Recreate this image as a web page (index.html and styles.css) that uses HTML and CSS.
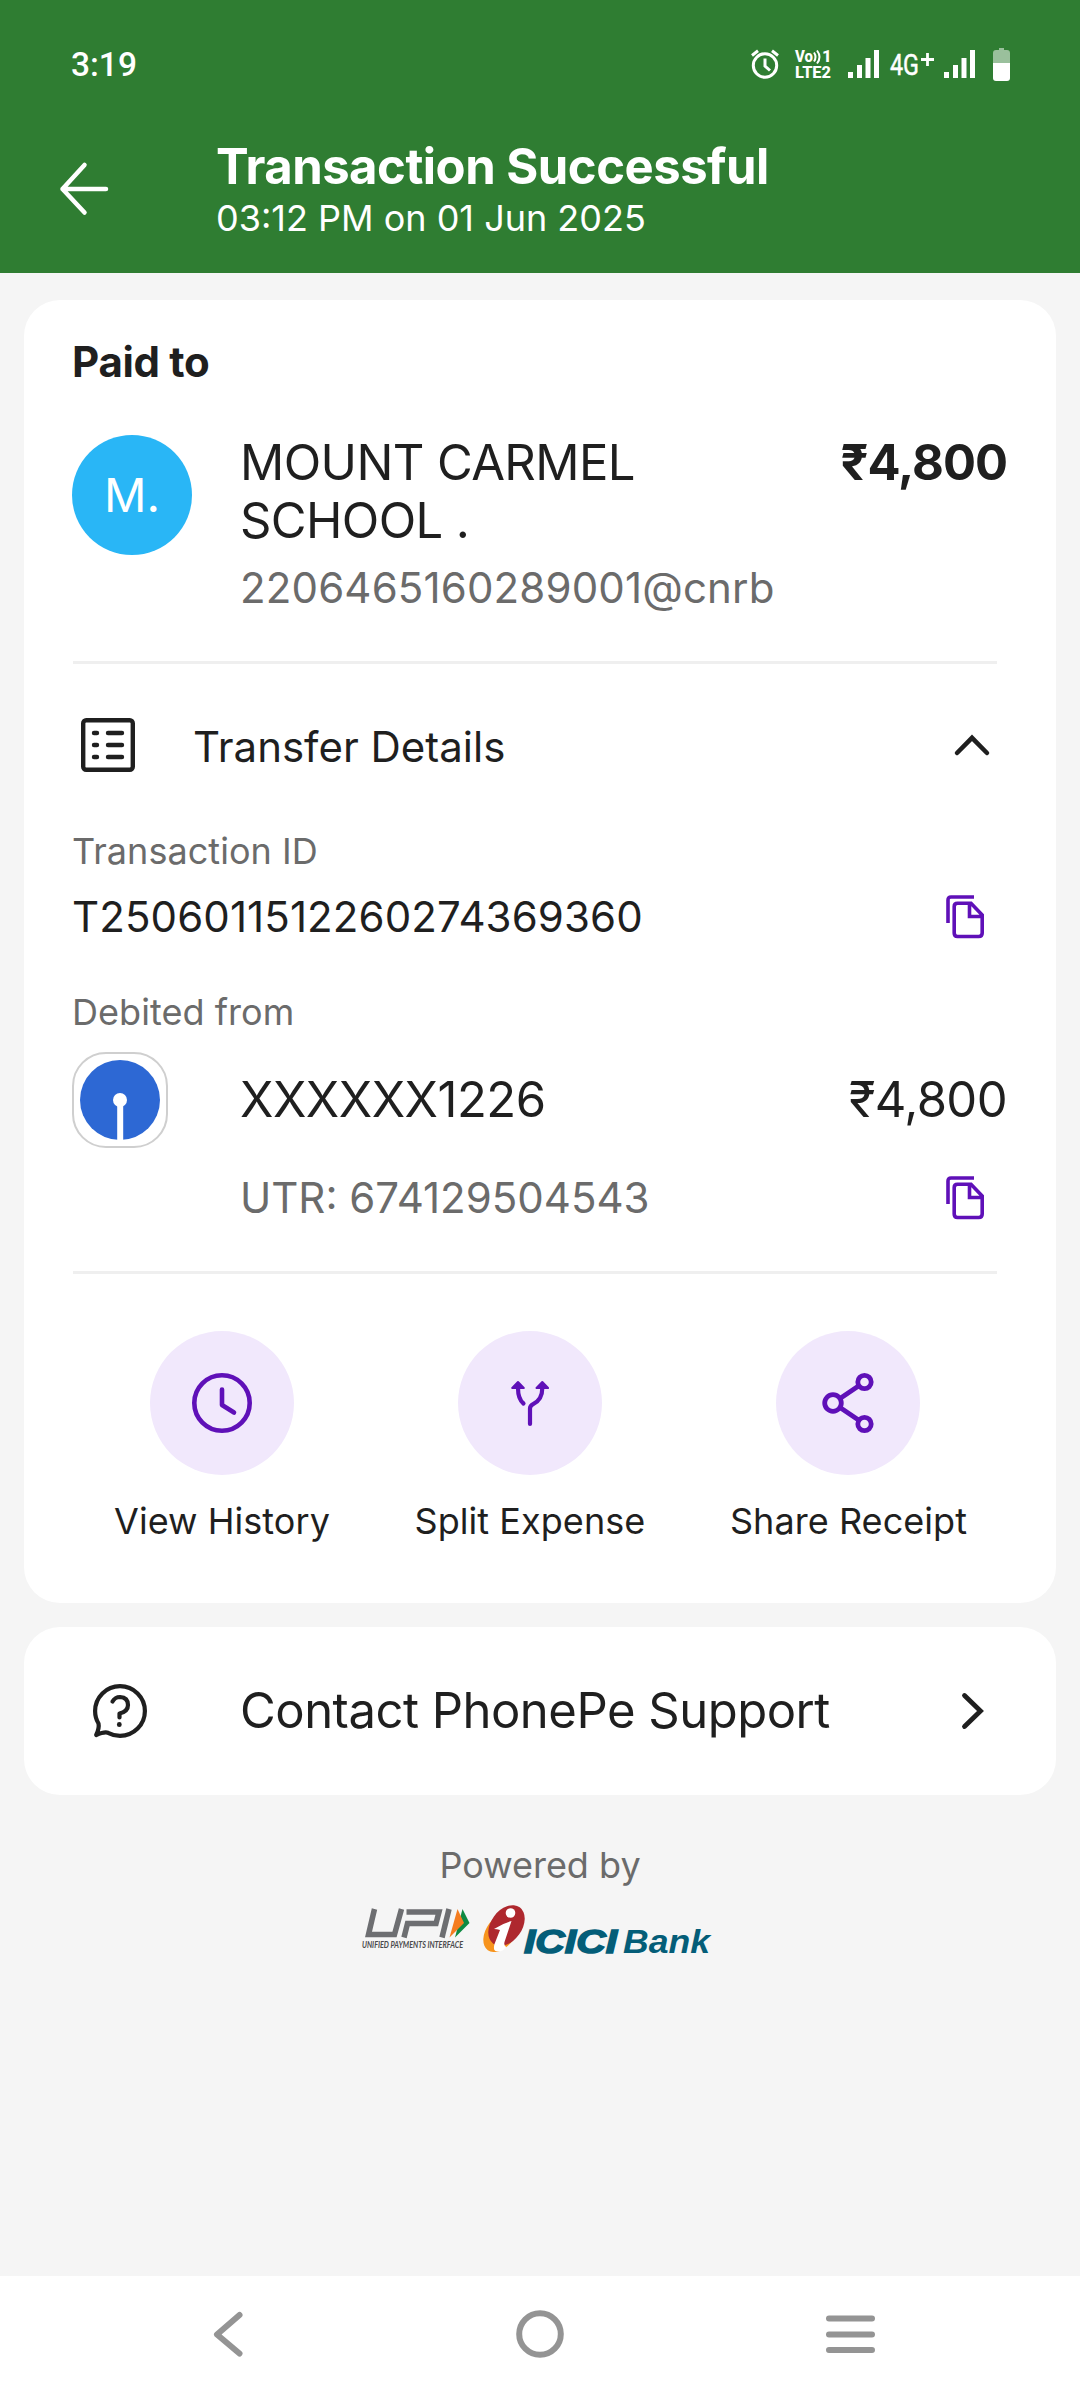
FILE: index.html
```
<!DOCTYPE html>
<html lang="en">
<head>
  <meta charset="UTF-8" />
  <meta name="viewport" content="width=device-width, initial-scale=1.0"/>
  <title>Transaction Successful</title>
  <link rel="stylesheet" href="styles.css">
</head>
<body>
  <!-- HEADER -->
  <header class="header">
    <div class="status-bar">
      <span class="time">3:19</span>
      <div class="status-icons">
        <svg class="alarm" width="30" height="30" viewBox="0 0 30 30" fill="none" stroke="#fff" stroke-width="3">
          <circle cx="15" cy="16.500" r="11.700"/>
          <path d="M2 6.500 8 1.800M28 6.500 22 1.800M15 9.500V17l5 4.500"/>
        </svg>
        <svg class="volte" width="41" height="38" viewBox="-2 -4 41 38">
          <text x="0" y="13" textLength="18" lengthAdjust="spacingAndGlyphs">Vo</text>
          <path d="M19 3.500q3 4.500 0 9M22 1.500q5 6.500 0 13" fill="none" stroke="#fff" stroke-width="2"/>
          <text x="27" y="13">1</text>
          <text x="0" y="28.500" textLength="36" lengthAdjust="spacingAndGlyphs">LTE2</text>
        </svg>
        <svg class="signal" width="31" height="28" viewBox="0 0 31 28" fill="#fff">
          <path d="M0 22h5v6H0zM9 15h5v13H9zM17.500 8h5v20h-5zM26 0h5v28h-5z"/>
        </svg>
        <svg class="net" width="44" height="36" viewBox="0 -4 44 36">
          <text x="0" y="24.500" textLength="29" lengthAdjust="spacingAndGlyphs">4G</text>
          <path d="M37.500 3v13M31 9.500h13" stroke="#fff" stroke-width="2.800"/>
        </svg>
        <svg class="signal second" width="31" height="28" viewBox="0 0 31 28" fill="#fff">
          <path d="M0 22h5v6H0zM9 15h5v13H9zM17.500 8h5v20h-5zM26 0h5v28h-5z"/>
        </svg>
        <svg class="battery" width="17" height="33" viewBox="0 0 17 33">
          <path d="M0 15V5q0-3 3-3h3V0h5v2h3q3 0 3 3v10z" fill="#9ac09c"/>
          <path d="M0 15h17v15q0 3-3 3H3q-3 0-3-3z" fill="#fff"/>
        </svg>
      </div>
    </div>
    <div class="title-bar">
      <svg class="back" width="50" height="54" viewBox="0 0 50 54" fill="none" stroke="#fff" stroke-width="4.500" stroke-linecap="round" stroke-linejoin="round">
        <path d="M25.500 3 3.500 27l22 23.500M3.500 27H47"/>
      </svg>
      <div class="titles">
        <h1>Transaction Successful</h1>
        <p>03:12 PM on 01 Jun 2025</p>
      </div>
    </div>
  </header>

  <!-- MAIN CONTENT -->
  <main class="content">
    <section class="card payment">
      <h2>Paid to</h2>
      <div class="payee">
        <div class="avatar">M.</div>
        <div class="payee-info">
          <div class="name">MOUNT CARMEL<br>SCHOOL .</div>
          <div class="vpa">2206465160289001@cnrb</div>
        </div>
        <div class="amount bold">₹4,800</div>
      </div>

      <hr>

      <div class="details-head">
        <svg class="list-icon" width="54" height="54" viewBox="0 0 54 54" fill="none" stroke="#1f1f1f" stroke-width="4.400">
          <rect x="2.200" y="2.200" width="49.600" height="49.600" rx="3"/>
          <path d="M13 15h3M27 15h14M13 27h3M27 27h14M13 39h3M27 39h14" stroke-linecap="round"/>
        </svg>
        <span class="details-title">Transfer Details</span>
        <svg class="chevron-up" width="36" height="22" viewBox="0 0 36 22" fill="none" stroke="#1f1f1f" stroke-width="4.500" stroke-linecap="round">
          <path d="M3 19 18 3.800 33 19"/>
        </svg>
      </div>

      <div class="label">Transaction ID</div>
      <div class="txn-row">
        <span class="txn-id">T2506011512260274369360</span>
        <svg class="copy" width="40" height="44" viewBox="0 0 40 44" fill="none" stroke="#5f10b8" stroke-width="3.600">
          <path d="M2 28V5q0-3 3-3h23"/>
          <path d="M11.500 8.200H25L36.200 20v18q0 3.500-3.500 3.500H11.500Q8.200 41.500 8.200 38V11.500q0-3.300 3.300-3.300zM23.500 9v12.500H36"/>
        </svg>
      </div>

      <div class="label debited">Debited from</div>
      <div class="bank-row">
        <div class="bank-logo">
          <svg width="80" height="80" viewBox="0 0 80 80">
            <circle cx="40" cy="40" r="40" fill="#2d68d4"/>
            <circle cx="40" cy="40" r="7" fill="#fff"/>
            <path d="M37.200 40h6v40h-6z" fill="#fff"/>
          </svg>
        </div>
        <span class="account">XXXXXX1226</span>
        <span class="amount">₹4,800</span>
      </div>
      <div class="utr-row">
        <span class="utr">UTR: 674129504543</span>
        <svg class="copy" width="40" height="44" viewBox="0 0 40 44" fill="none" stroke="#5f10b8" stroke-width="3.600">
          <path d="M2 28V5q0-3 3-3h23"/>
          <path d="M11.500 8.200H25L36.200 20v18q0 3.500-3.500 3.500H11.500Q8.200 41.500 8.200 38V11.500q0-3.300 3.300-3.300zM23.500 9v12.500H36"/>
        </svg>
      </div>

      <hr>

      <div class="actions">
        <div class="action">
          <div class="circle">
            <svg width="60" height="60" viewBox="0 0 60 60" fill="none" stroke="#5f10b8" stroke-width="4.600">
              <circle cx="30" cy="30" r="27.700"/>
              <path d="M30 16.500V32l12 7.500" stroke-linecap="round" stroke-linejoin="round"/>
            </svg>
          </div>
          <span>View History</span>
        </div>
        <div class="action">
          <div class="circle">
            <svg width="38" height="46" viewBox="0 0 38 46" fill="none" stroke="#5f10b8" stroke-width="4.200" stroke-linecap="round">
              <path d="M19 44V28.500q0-3 3.500-4.700 8.800-4.300 8.800-15.800M7 8q0 11 5.500 15.500"/>
              <path d="M1.200 8 7 2l5.800 6zM25.500 8l5.800-6 5.800 6z" fill="#5f10b8" stroke-width="2" stroke-linejoin="round"/>
            </svg>
          </div>
          <span>Split Expense</span>
        </div>
        <div class="action">
          <div class="circle">
            <svg width="52" height="60" viewBox="0 0 52 60" fill="none" stroke="#5f10b8" stroke-width="4.800">
              <circle cx="11" cy="30" r="8.300"/>
              <circle cx="42.500" cy="9" r="6.700"/>
              <circle cx="42.500" cy="51" r="6.700"/>
              <path d="M18 25.500 36.500 13M18 34.500 36.500 47"/>
            </svg>
          </div>
          <span>Share Receipt</span>
        </div>
      </div>
    </section>

    <section class="card support">
      <svg class="help-icon" width="54" height="54" viewBox="0 0 54 54" fill="none" stroke="#1f1f1f" stroke-width="4.200" stroke-linejoin="round" stroke-linecap="round">
        <path d="M5.500 39.500Q2.100 34 2.100 27a24.900 24.900 0 1 1 24.900 24.900Q21 51.900 15 48.800 11.500 47.500 3.200 51 6.500 44 5.500 39.500z"/>
        <path d="M19.500 17.500q2.500-4.500 7.500-4.500 8 .5 8 8 0 6.500-8.500 8.500v4"/>
        <path d="M26.300 40.500v.2" stroke-width="4.800"/>
      </svg>
      <span class="support-text">Contact PhonePe Support</span>
      <svg class="chevron-right" width="22" height="36" viewBox="0 0 22 36" fill="none" stroke="#1f1f1f" stroke-width="4.800" stroke-linecap="round">
        <path d="M2.500 2.500 18.500 18l-16 15.500"/>
      </svg>
    </section>

    <div class="powered">
      <p>Powered by</p>
      <div class="logos">
        <svg class="upi" width="110" height="48" viewBox="0 0 110 48">
          <g fill="none" stroke="#6d6e71" stroke-width="5.500">
            <path d="M13.500 1 7.500 26.500h26L40.500 1"/>
            <path d="M45.500 4h32.500l-3 11.500H46.500L43 29.500"/>
            <path d="M88 1 81 29.500"/>
          </g>
          <path d="M101.500 1 108.500 15 94 29.500z" fill="#0e8a43"/>
          <path d="M96.500 1 103 15 88.500 29.500z" fill="#f47c20"/>
          <text class="upi-tag" x="1" y="39.500" textLength="101" lengthAdjust="spacingAndGlyphs">UNIFIED PAYMENTS INTERFACE</text>
        </svg>
        <svg class="icici-logo" width="236" height="60" viewBox="0 0 236 60">
          <ellipse cx="19" cy="28" rx="14.500" ry="22.500" transform="rotate(36 19 28)" fill="#f7941d"/>
          <ellipse cx="24.500" cy="21.500" rx="15.500" ry="22.500" transform="rotate(36 24.500 21.500)" fill="#ae282e"/>
          <circle cx="28.500" cy="9" r="4.800" fill="#fff"/>
          <path d="M12 25q9-6 17.500-8l-7 21q-1 4 2 5-4 5-9 4.500-5 0-3-7.500l5.500-14q-3-1-6-1z" fill="#fff"/>
          <text class="icici" x="42" y="48.500" textLength="93" lengthAdjust="spacingAndGlyphs">ICICI</text>
          <text class="icici-bank" x="141" y="48.500" textLength="87" lengthAdjust="spacingAndGlyphs">Bank</text>
        </svg>
      </div>
    </div>
  </main>

  <!-- SYSTEM NAVIGATION -->
  <nav class="nav-bar">
    <svg width="32" height="46" viewBox="0 0 32 46" fill="none" stroke="#949494" stroke-width="6" stroke-linecap="round" stroke-linejoin="round">
      <path d="M27.500 4 5 23.500l22.500 19"/>
    </svg>
    <svg class="home" width="48" height="48" viewBox="0 0 48 48" fill="none" stroke="#949494" stroke-width="6">
      <circle cx="24" cy="24" r="20.800"/>
    </svg>
    <svg width="49" height="38" viewBox="0 0 49 38" fill="none" stroke="#949494" stroke-width="6" stroke-linecap="round">
      <path d="M3 3.500h43M3 19.500h43M3 35h43"/>
    </svg>
  </nav>
</body>
</html>
```
FILE: styles.css
```
/* ------------------------------------------------------------
   COLOR PALETTE
------------------------------------------------------------ */
:root {
  --green: #2f7d32;
  --page: #f5f5f5;
  --text: #1f1f1f;
  --muted: #6b6b6b;
  --line: #efefef;
  --lilac: #f1e8fc;
}

/* ------------------------------------------------------------
   GLOBAL & RESET
------------------------------------------------------------ */
* {
  margin: 0;
  padding: 0;
  box-sizing: border-box;
}
body {
  font-family: Inter, "Noto Sans", sans-serif;
  background-color: var(--page);
  color: var(--text);
  width: 1080px;
  height: 2392px;
  display: flex;
  flex-direction: column;
  overflow: hidden;
}
svg {
  display: block;
  flex-shrink: 0;
  overflow: visible;
}

/* ------------------------------------------------------------
   HEADER
------------------------------------------------------------ */
.header {
  background-color: var(--green);
  color: #fff;
  height: 273px;
}
.status-bar {
  height: 128px;
  padding: 0 70px 0 71px;
  display: flex;
  align-items: center;
  justify-content: space-between;
  font-family: Roboto, sans-serif;
}
.time {
  font-size: 33.5px;
  font-weight: 500;
}
.status-icons {
  display: flex;
  align-items: center;
}
.volte {
  margin-left: 13px;
}
.volte text {
  font-size: 17px;
  font-weight: 800;
  fill: #fff;
}
.signal {
  margin-left: 14px;
}
.net {
  margin-left: 11px;
}
.net text {
  font-size: 30px;
  fill: #fff;
  stroke: #fff;
  stroke-width: 0.5;
}
.signal.second {
  margin-left: 10px;
}
.battery {
  margin-left: 18px;
}
.title-bar {
  display: flex;
  padding-left: 59px;
}
.back {
  margin-top: 34px;
}
.titles {
  margin-left: 107px;
  padding-top: 10px;
}
.titles h1 {
  font-size: 49px;
  line-height: 58px;
  font-weight: 700;
  letter-spacing: -0.5px;
}
.titles p {
  font-size: 36px;
  line-height: 44px;
}

/* ------------------------------------------------------------
   PAYMENT CARD
------------------------------------------------------------ */
.content {
  flex: 1;
  padding: 27px 24px 0;
}
.card {
  background-color: #fff;
  border-radius: 36px;
}
.payment {
  height: 1303px;
  padding: 36px 49px 0 48px;
}
.payment h2 {
  font-size: 42px;
  line-height: 52px;
  font-weight: 700;
  letter-spacing: -0.3px;
}
.payee {
  display: flex;
  align-items: flex-start;
  height: 226px;
  margin-top: 47px;
}
.avatar {
  width: 120px;
  height: 120px;
  border-radius: 50%;
  background-color: #29b6f6;
  color: #fff;
  font-size: 47px;
  padding-bottom: 2px;
  display: flex;
  align-items: center;
  justify-content: center;
}
.payee-info {
  margin-left: 48px;
  flex: 1;
}
.name {
  font-size: 49px;
  line-height: 58px;
  letter-spacing: -0.6px;
  margin-top: -1px;
}
.vpa {
  font-size: 42px;
  line-height: 52px;
  margin-top: 12px;
  letter-spacing: 0.15px;
  color: var(--muted);
}
.amount {
  font-size: 49px;
  line-height: 58px;
  letter-spacing: -0.6px;
}
.amount.bold {
  font-weight: 700;
  letter-spacing: -1px;
  margin-top: -1px;
}
hr {
  border: none;
  height: 3px;
  background-color: var(--line);
  margin: 0 10px 0 1px;
}

/* Transfer details */
.details-head {
  display: flex;
  align-items: center;
  height: 54px;
  margin-top: 54px;
  padding: 0 17px 0 9px;
}
.details-title {
  font-size: 42px;
  margin-left: 58px;
  padding-top: 2px;
  flex: 1;
}
.label {
  font-size: 36px;
  line-height: 44px;
  letter-spacing: 0.05px;
  color: var(--muted);
  margin-top: 57px;
}
.txn-row,
.utr-row {
  display: flex;
  align-items: center;
  justify-content: space-between;
  height: 52px;
  padding-right: 21px;
  font-size: 42px;
}
.txn-row {
  margin-top: 18px;
}
.txn-id {
  letter-spacing: 0.1px;
  padding-bottom: 2px;
}
.utr {
  padding-bottom: 1px;
}
.label.debited {
  margin-top: 47px;
}
.bank-row {
  display: flex;
  align-items: center;
  margin-top: 18px;
}
.bank-logo {
  width: 96px;
  height: 96px;
  border: 2px solid #cfcfcf;
  border-radius: 34px;
  display: flex;
  align-items: center;
  justify-content: center;
}
.account {
  font-size: 49px;
  letter-spacing: -0.5px;
  margin-left: 72px;
  padding-bottom: 1px;
  flex: 1;
}
.utr-row {
  margin-top: 24px;
  padding-left: 168px;
  color: var(--muted);
}
.utr-row + hr {
  margin-top: 47px;
}

/* Action buttons */
.actions {
  display: flex;
  justify-content: space-between;
  margin-top: 57px;
  padding: 0 40px 0 42px;
}
.action {
  display: flex;
  flex-direction: column;
  align-items: center;
  font-size: 36px;
  line-height: 44px;
  letter-spacing: 0.05px;
}
.circle {
  width: 144px;
  height: 144px;
  border-radius: 50%;
  background-color: var(--lilac);
  display: flex;
  align-items: center;
  justify-content: center;
  margin-bottom: 24px;
}

/* ------------------------------------------------------------
   SUPPORT CARD
------------------------------------------------------------ */
.support {
  display: flex;
  align-items: center;
  height: 168px;
  margin-top: 24px;
  padding: 0 72px 0 69px;
}
.support-text {
  font-size: 49px;
  letter-spacing: -0.5px;
  margin-left: 93px;
  padding-bottom: 2px;
  flex: 1;
}

/* ------------------------------------------------------------
   POWERED BY
------------------------------------------------------------ */
.powered {
  margin-top: 48px;
  text-align: center;
  color: var(--muted);
  font-size: 36px;
  line-height: 44px;
}
.logos {
  display: flex;
  align-items: flex-start;
  justify-content: center;
  gap: 11px;
  margin-top: 17px;
  padding-right: 2px;
}
.upi {
  margin-top: 4px;
}
.upi-tag {
  font-family: Lato, sans-serif;
  font-style: italic;
  font-weight: 700;
  font-size: 8.500px;
  fill: #4a4a4c;
}
.icici,
.icici-bank {
  font-family: "Liberation Sans", sans-serif;
  font-style: italic;
  font-weight: 700;
  font-size: 33px;
  fill: #045d78;
}
.icici {
  stroke: #045d78;
  stroke-width: 1.5;
}

/* ------------------------------------------------------------
   SYSTEM NAVIGATION
------------------------------------------------------------ */
.nav-bar {
  background-color: #fff;
  height: 116px;
  display: flex;
  align-items: center;
  padding-left: 212px;
}
.home {
  margin: 0 262px 0 272px;
}
```
